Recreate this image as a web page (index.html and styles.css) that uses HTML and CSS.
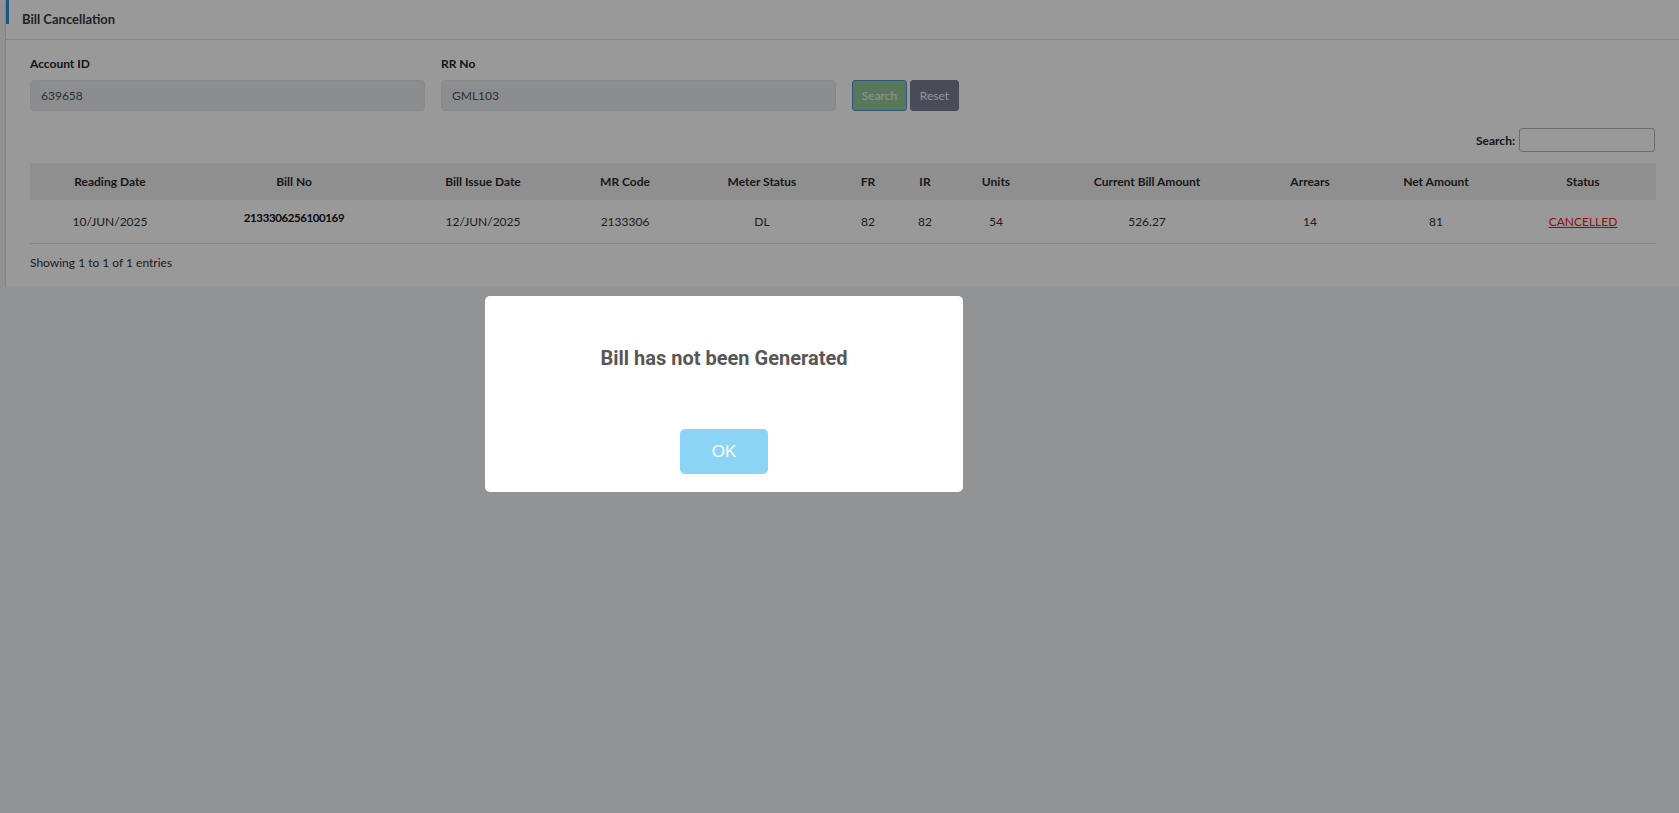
FILE: index.html
```html
<!DOCTYPE html>
<html lang="en">
<head>
    <meta charset="UTF-8">
    <meta name="viewport" content="width=device-width, initial-scale=1.0">
    <title>Bill Cancellation</title>
    <link rel="stylesheet" href="styles.css">
</head>
<body>
    <div class="content">
        <div class="card">
            <div class="card-header">
                <h3 class="card-title">Bill Cancellation</h3>
            </div>
            <div class="card-body">
                <div class="search-form">
                    <div class="field">
                        <label for="account-id">Account ID</label>
                        <input id="account-id" class="form-control" type="text" value="639658" readonly>
                    </div>
                    <div class="field">
                        <label for="rr-no">RR No</label>
                        <input id="rr-no" class="form-control" type="text" value="GML103" readonly>
                    </div>
                    <div class="actions">
                        <button class="btn btn-search">Search</button>
                        <button class="btn btn-reset">Reset</button>
                    </div>
                </div>

                <div class="table-filter">
                    <label>Search:<input type="search"></label>
                </div>

                <table class="bill-table">
                    <colgroup>
                        <col class="c-reading">
                        <col class="c-billno">
                        <col class="c-issue">
                        <col class="c-mr">
                        <col class="c-meter">
                        <col class="c-fr">
                        <col class="c-ir">
                        <col class="c-units">
                        <col class="c-current">
                        <col class="c-arrears">
                        <col class="c-net">
                        <col class="c-status">
                    </colgroup>
                    <thead>
                        <tr>
                            <th>Reading Date</th>
                            <th>Bill No</th>
                            <th>Bill Issue Date</th>
                            <th>MR Code</th>
                            <th>Meter Status</th>
                            <th>FR</th>
                            <th>IR</th>
                            <th>Units</th>
                            <th>Current Bill Amount</th>
                            <th>Arrears</th>
                            <th>Net Amount</th>
                            <th>Status</th>
                        </tr>
                    </thead>
                    <tbody>
                        <tr>
                            <td>10/JUN/2025</td>
                            <td class="bill-no"><b>2133306256100169</b></td>
                            <td>12/JUN/2025</td>
                            <td>2133306</td>
                            <td>DL</td>
                            <td>82</td>
                            <td>82</td>
                            <td>54</td>
                            <td>526.27</td>
                            <td>14</td>
                            <td>81</td>
                            <td><a href="#" class="status-link">CANCELLED</a></td>
                        </tr>
                    </tbody>
                </table>

                <div class="table-info">Showing 1 to 1 of 1 entries</div>
            </div>
        </div>
    </div>

    <div class="overlay"></div>
    <div class="sweet-alert">
        <h2>Bill has not been Generated</h2>
        <div class="sa-buttons">
            <button class="confirm">OK</button>
        </div>
    </div>
</body>
</html>
```

FILE: styles.css
```css
body {
    margin: 0;
    font-family: Lato, "Open Sans", sans-serif;
    font-size: 12px;
    color: #212529;
    background-color: #f4f6f9;
    overflow: hidden;
}
.content {
    padding-left: 6px;
}
.card {
    background-color: #fff;
    box-shadow: 0 0 1px rgba(0, 0, 0, 0.125), 0 1px 3px rgba(0, 0, 0, 0.2);
}
.card-header {
    position: relative;
    height: 38px;
    display: flex;
    align-items: center;
    padding-left: 16px;
    padding-bottom: 1px;
    border-bottom: 1px solid #e3e3e3;
}
.card-header::before {
    content: "";
    position: absolute;
    left: 0;
    top: 0;
    width: 3px;
    height: 24px;
    background-color: #2a8fd6;
}
.card-title {
    margin: 0;
    font-size: 13px;
    font-weight: bold;
    color: #343a40;
}
.card-body {
    padding: 15px 24px 15px 24px;
}
.search-form {
    display: flex;
    align-items: flex-end;
    gap: 16px;
}
.field {
    width: 395px;
    display: flex;
    flex-direction: column;
}
.field label {
    font-weight: bold;
    line-height: 18px;
    margin-bottom: 7px;
}
.form-control {
    height: 31px;
    box-sizing: border-box;
    padding: 0 10px;
    border: 1px solid #e2e5e9;
    border-radius: 4px;
    background-color: #e9ecef;
    color: #495057;
    font-family: inherit;
    font-size: 12px;
}
.actions {
    display: flex;
    gap: 3px;
}
.btn {
    height: 31px;
    border-radius: 3px;
    font-family: inherit;
    font-size: 12px;
    cursor: pointer;
}
.btn-search {
    width: 55px;
    background-color: #93c99a;
    border: 1px solid #4f8fd0;
    color: #f2f2f2;
}
.btn-reset {
    width: 49px;
    background-color: #7a7d92;
    border: 1px solid #7a7d92;
    color: #f4f4fa;
}
.table-filter {
    display: flex;
    justify-content: flex-end;
    margin-top: 17px;
}
.table-filter label {
    font-weight: bold;
    display: flex;
    align-items: center;
    gap: 4px;
}
.table-filter input {
    width: 136px;
    height: 24px;
    box-sizing: border-box;
    border: 1px solid #b5b5b5;
    border-radius: 3px;
    margin: 0;
}
.bill-table {
    width: 1626px;
    margin-top: 11px;
    border-collapse: collapse;
    table-layout: fixed;
    text-align: center;
}
.c-reading { width: 160px; }
.c-billno { width: 208px; }
.c-issue { width: 170px; }
.c-mr { width: 114px; }
.c-meter { width: 160px; }
.c-fr { width: 52px; }
.c-ir { width: 62px; }
.c-units { width: 80px; }
.c-current { width: 222px; }
.c-arrears { width: 104px; }
.c-net { width: 148px; }
.c-status { width: 146px; }
.bill-table th {
    height: 37px;
    padding: 0;
    background-color: #eeeeee;
    font-weight: bold;
    color: #2b2b2b;
}
.bill-table td {
    height: 43px;
    padding: 0;
    border-bottom: 1px solid #dee2e6;
    color: #333;
}
.bill-table td.bill-no {
    height: 35px;
    padding-bottom: 8px;
    color: #111;
    font-size: 11.5px;
    letter-spacing: -0.4px;
}
.status-link {
    color: #ff1010;
    text-decoration: underline;
}
.table-info {
    margin-top: 10px;
    line-height: 18px;
    color: #333;
}
.overlay {
    position: fixed;
    inset: 0;
    background-color: rgba(0, 0, 0, 0.4);
}
.sweet-alert {
    position: fixed;
    left: 485px;
    top: 296px;
    width: 478px;
    height: 196px;
    box-sizing: border-box;
    padding: 46px 17px 0 17px;
    background-color: #fff;
    border-radius: 5px;
    text-align: center;
    font-family: Roboto, "Open Sans", sans-serif;
}
.sweet-alert h2 {
    margin: 0;
    font-size: 20px;
    line-height: 32px;
    font-weight: bold;
    color: #575757;
}
.sa-buttons {
    margin-top: 55px;
}
.sweet-alert .confirm {
    width: 88px;
    height: 45px;
    border: none;
    border-radius: 5px;
    background-color: #8cd4f5;
    color: #fff;
    font-family: "Liberation Sans", Arial, sans-serif;
    font-size: 17px;
    cursor: pointer;
}
```
